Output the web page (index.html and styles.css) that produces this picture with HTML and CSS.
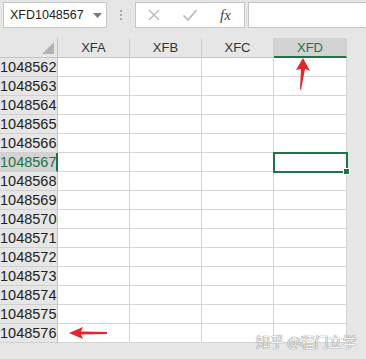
FILE: index.html
```html
<!DOCTYPE html>
<html lang="zh">
<head>
    <meta charset="UTF-8">
    <meta name="viewport" content="width=device-width, initial-scale=1.0">
    <title>XFD1048567</title>
    <link rel="stylesheet" href="styles.css">
</head>
<body>
    <div class="toolbar">
        <div class="name-box">
            <span>XFD1048567</span>
            <svg class="caret" width="9" height="5" viewBox="0 0 9 5"><polygon points="0,0 9,0 4.5,5" fill="#7a7a7a"/></svg>
        </div>
        <div class="grip"><i></i><i></i><i></i></div>
        <div class="fx-box">
            <svg width="14" height="14" viewBox="0 0 14 14"><path d="M2 2 L12 12 M12 2 L2 12" stroke="#b8b8b8" stroke-width="1.4" fill="none"/></svg>
            <svg width="16" height="14" viewBox="0 0 16 14"><path d="M1.5 7.5 L6 12 L14.5 2" stroke="#b8b8b8" stroke-width="1.6" fill="none"/></svg>
            <span class="fx">fx</span>
        </div>
        <div class="formula"></div>
    </div>

    <div class="sheet">
        <div class="grid" id="grid">
            <div class="corner"><svg width="12" height="12" viewBox="0 0 12 12"><polygon points="12,0 12,12 0,12" fill="#b4b4b4"/></svg></div>
            <div class="col-head">XFA</div>
            <div class="col-head">XFB</div>
            <div class="col-head">XFC</div>
            <div class="col-head selected">XFD</div>
        </div>
        <div class="side"></div>
    </div>

    <svg class="arrow-up" width="20" height="32" viewBox="0 0 20 32">
        <polygon points="11,0 18,13 13,11 9,32 8,31 9,11 4,12" fill="#e8242b"/>
    </svg>
    <svg class="arrow-left" width="40" height="12" viewBox="0 0 40 12">
        <polygon points="0,6 14,0 12,4.5 38,5 38,7 12,7.5 14,12" fill="#e8242b"/>
    </svg>
    <div class="watermark">知乎 @程门立学</div>

    <script>
        const grid = document.getElementById("grid");
        for (let r = 1048562; r <= 1048576; r++) {
            const active = r === 1048567;
            const head = document.createElement("div");
            head.className = active ? "row-head selected" : "row-head";
            head.textContent = r;
            grid.appendChild(head);
            for (let c = 0; c < 4; c++) {
                const cell = document.createElement("div");
                cell.className = active && c === 3 ? "cell active" : "cell";
                grid.appendChild(cell);
            }
        }
    </script>
</body>
</html>
```

FILE: styles.css
```css
body {
    margin: 0;
    padding: 0;
    background: #e6e6e6;
    font-family: "Liberation Sans", Arial, sans-serif;
    color: #222;
    width: 366px;
    height: 359px;
    overflow: hidden;
    position: relative;
}
.toolbar {
    display: flex;
    align-items: center;
    height: 26px;
    padding: 2px 0 0 3px;
    margin-bottom: 10px;
}
.name-box {
    box-sizing: border-box;
    width: 104px;
    height: 26px;
    background: #fff;
    border: 1px solid #c6c6c6;
    display: flex;
    align-items: center;
    padding: 0 0 0 6px;
    font-size: 12.5px;
    color: #222;
}
.caret {
    margin: 1px 0 0 9px;
}
.grip {
    width: 28px;
    display: flex;
    flex-direction: column;
    align-items: center;
    gap: 2px;
}
.grip i {
    width: 2px;
    height: 2px;
    background: #a8a8a8;
}
.fx-box {
    box-sizing: border-box;
    width: 110px;
    height: 26px;
    background: #fff;
    border: 1px solid #c6c6c6;
    display: flex;
    align-items: center;
    padding: 0 0 0 11px;
    gap: 21px;
}
.fx {
    font-family: "Liberation Serif", serif;
    font-style: italic;
    font-size: 15px;
    color: #444;
    margin-left: 1px;
}
.formula {
    flex: 1;
    box-sizing: border-box;
    height: 26px;
    margin-left: 3px;
    background: #fff;
    border: 1px solid #c6c6c6;
    border-right: none;
}
.sheet {
    display: flex;
}
.grid {
    display: grid;
    grid-template-columns: 58px 72px 72px 72px 73px;
    grid-template-rows: 20px;
    grid-auto-rows: 19px;
}
.corner {
    box-sizing: border-box;
    border-right: 1px solid #c4c4c4;
    border-bottom: 1px solid #c4c4c4;
    display: flex;
    align-items: flex-end;
    justify-content: flex-end;
    padding: 0 3px 3px 0;
}
.col-head {
    box-sizing: border-box;
    border-right: 1px solid #cfcfcf;
    border-bottom: 1px solid #c4c4c4;
    text-align: center;
    font-size: 13px;
    line-height: 20px;
    color: #333;
}
.col-head.selected {
    background: #d3d3d3;
    color: #217346;
    border-bottom: 2px solid #217346;
}
.row-head {
    box-sizing: border-box;
    border-right: 1px solid #c4c4c4;
    border-bottom: 1px solid #d0d0d0;
    font-size: 14.5px;
    line-height: 19px;
    padding-left: 0;
    color: #222;
    overflow: hidden;
    white-space: nowrap;
}
.row-head.selected {
    background: #d3d3d3;
    color: #217346;
    border-right: 2px solid #217346;
}
.cell {
    box-sizing: border-box;
    background: #fff;
    border-right: 1px solid #d4d4d4;
    border-bottom: 1px solid #d4d4d4;
}
.cell.active {
    position: relative;
    outline: 2px solid #217346;
    outline-offset: -1px;
    z-index: 1;
}
.cell.active::after {
    content: "";
    position: absolute;
    right: -4px;
    bottom: -4px;
    width: 5px;
    height: 5px;
    background: #217346;
    border: 1px solid #fff;
}
.side {
    flex: 1;
}
.arrow-up {
    position: absolute;
    left: 292px;
    top: 58px;
}
.arrow-left {
    position: absolute;
    left: 69px;
    top: 327px;
}
.watermark {
    position: absolute;
    left: 256px;
    top: 331px;
    white-space: nowrap;
    font-family: "Noto Sans CJK SC", sans-serif;
    font-size: 14px;
    color: #f4f4f4;
    text-shadow: 0 0 1px #7a7a7a, 0 0 1px #7a7a7a;
}
```
